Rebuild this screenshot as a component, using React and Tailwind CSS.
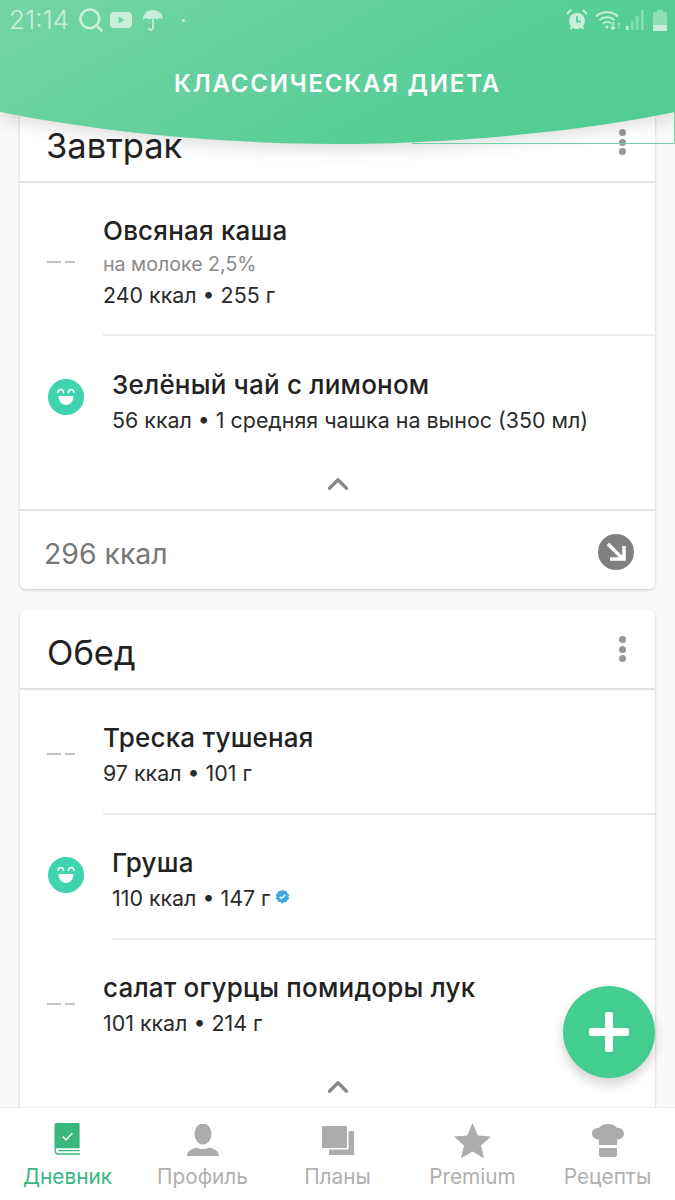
import { ChevronUp, Search } from "lucide-react";

const font = "font-[Inter,'Noto_Sans',sans-serif]";

function Dash({ offset }) {
  return (
    <div className={`flex w-[28px] gap-[4px] ${offset}`}>
      <span className="h-[2px] w-[14px] bg-[#c4c4c4]" />
      <span className="h-[2px] w-[10px] bg-[#c4c4c4]" />
    </div>
  );
}

function Smile() {
  return (
    <svg width="36" height="36" viewBox="0 0 36 36" className="mt-[10px] shrink-0">
      <circle cx="18" cy="18" r="18" fill="#3fd3ae" />
      <path d="M10 13.5c.6-4 5-4 5.6 0M20.4 13.5c.6-4 5-4 5.6 0" fill="none" stroke="#fff" strokeWidth="1.6" strokeLinecap="round" />
      <path d="M10.5 17h15c0 5.5-3.2 9-7.5 9s-7.5-3.500-7.500-9z" fill="#fff" />
    </svg>
  );
}

function Verified() {
  return (
    <svg width="15" height="15" viewBox="0 0 24 24" className="ml-[5px] mb-[3px]">
      <path d="M12 1l3 2.200 3.700-.1 1.100 3.500 3 2.200-1.200 3.200 1.200 3.200-3 2.200-1.100 3.500-3.700-.1L12 23l-3-2.200-3.700.1-1.100-3.500-3-2.200L2.400 12 1.200 8.800l3-2.200 1.100-3.500 3.700.1z" fill="#3fa6e6" />
      <path d="M7.500 12.300l3 3 6-6" fill="none" stroke="#fff" strokeWidth="2.200" />
    </svg>
  );
}

function Food({ icon, name, note, kcal, badge, top = "pt-[32px]", bottom = "pb-[22px]" }) {
  return (
    <div className={`flex items-start pl-[27px] ${top} ${bottom}`}>
      <div className={icon === "smile" ? "ml-px mr-[28px]" : "mr-[28px]"}>
        {icon === "smile" ? <Smile /> : <Dash offset={icon} />}
      </div>
      <div>
        <div className="text-[26px] leading-[32px] font-medium tracking-[0.2px] text-[#222] whitespace-nowrap">{name}</div>
        {note && <div className="text-[19.600px] leading-[34px] text-[#8a8a8a]">{note}</div>}
        <div className={`flex items-center text-[21.400px] leading-[36px] text-[#2a2a2a] whitespace-nowrap ${note ? "-mt-[4px]" : "mt-px"}`}>
          {kcal}
          {badge && <Verified />}
        </div>
      </div>
    </div>
  );
}

function CardHead({ title, left = "pl-[26px]" }) {
  return (
    <div className={`flex h-[80px] items-start justify-between border-b-2 border-[#e2e2e2] pr-[29px] ${left}`}>
      <div className="mt-[22px] text-[34.500px] leading-[42px] text-[#222]">{title}</div>
      <div className="mt-[26px] flex flex-col gap-[2.500px]">
        <span className="size-[7px] rounded-full bg-[#969696]" />
        <span className="size-[7px] rounded-full bg-[#969696]" />
        <span className="size-[7px] rounded-full bg-[#969696]" />
      </div>
    </div>
  );
}

function Collapse() {
  return (
    <div className="flex h-[71px] justify-center pt-[29px]">
      <ChevronUp size={34} strokeWidth={2.3} className="text-[#888]" />
    </div>
  );
}

function StatusBar() {
  return (
    <div className="flex h-[40px] items-center justify-between pl-[9px] pr-[8px] text-[#c9efdc]">
      <div className="flex items-center">
        <span className="text-[26px] leading-none font-light">21:14</span>
        <Search size={28} strokeWidth={2.2} className="ml-[8px]" />
        <svg width="22" height="16" viewBox="0 0 22 16" className="ml-[5px]">
          <rect width="22" height="16" rx="4" fill="currentColor" />
          <path d="M8.500 4.500l6 3.500-6 3.500z" fill="#6fd2a3" />
        </svg>
        <svg width="22" height="22" viewBox="0 0 22 22" className="ml-[10px]">
          <path d="M1 10.500C1 5 5.500 1 11 1s10 4 10 9.500c-2-1.600-4-1.600-6 0-2.500-1.600-5.500-1.600-8 0-2-1.600-4-1.600-6 0z" fill="currentColor" />
          <path d="M11 9v9.500c0 3-4 3-4 .5" fill="none" stroke="currentColor" strokeWidth="1.800" />
        </svg>
        <span className="ml-[18px] size-[3px] rounded-full bg-current" />
      </div>
      <div className="flex items-center">
        <svg width="22" height="22" viewBox="0 0 22 22">
          <circle cx="11" cy="12" r="8" fill="currentColor" />
          <path d="M11 7v5.500h4" fill="none" stroke="#60cf9c" strokeWidth="1.800" />
          <path d="M1 5l4-4M21 5l-4-4M4.500 20l2-2.500M17.500 20l-2-2.500" stroke="currentColor" strokeWidth="2" />
        </svg>
        <svg width="27" height="22" viewBox="0 0 27 22" className="ml-[7px]">
          <path d="M1 7.500C7 1.800 17 1.800 23 7.500M4.500 11c4.500-3.800 10.500-3.800 15 0M8 14.500c2.500-2 5.500-2 8 0" fill="none" stroke="currentColor" strokeWidth="1.800" />
          <circle cx="12" cy="18" r="1.600" fill="currentColor" />
          <path d="M18 13v7M16 18l2 2.500 2-2.500" fill="none" stroke="currentColor" strokeWidth="1.400" />
          <path d="M24 20v-6M22.500 16l1.500-2 1.500 2" fill="none" stroke="currentColor" strokeWidth="1" opacity=".6" />
        </svg>
        <svg width="18" height="20" viewBox="0 0 18 20" className="ml-[4px]">
          <rect x="0" y="16" width="2.500" height="4" fill="currentColor" />
          <rect x="5" y="11" width="2.500" height="9" fill="currentColor" opacity=".45" />
          <rect x="10" y="6" width="2.500" height="14" fill="currentColor" opacity=".45" />
          <rect x="15" y="0" width="2.500" height="20" fill="currentColor" opacity=".45" />
        </svg>
        <svg width="14" height="21" viewBox="0 0 14 21" className="ml-[9px]">
          <path d="M4 0h6v2h3a1 1 0 0 1 1 1v17a1 1 0 0 1-1 1H1a1 1 0 0 1-1-1V3a1 1 0 0 1 1-1h3z" fill="currentColor" opacity=".5" />
          <path d="M0 15h14v5a1 1 0 0 1-1 1H1a1 1 0 0 1-1-1z" fill="currentColor" />
        </svg>
      </div>
    </div>
  );
}

function Header() {
  return (
    <div className="absolute inset-x-0 top-0 h-[146px]">
      <svg width="675" height="146" viewBox="0 0 675 146" className="absolute inset-0 drop-shadow-[0_6px_8px_rgba(0,0,0,0.12)]">
        <defs>
          <linearGradient id="headerFill" x1="0" y1="0" x2="1" y2="0.4">
            <stop offset="0" stopColor="#74d4a6" />
            <stop offset="1" stopColor="#51cc95" />
          </linearGradient>
        </defs>
        <path d="M0 112C110 134 230 144 340 144C420 144 560 136 675 112V0H0z" fill="url(#headerFill)" />
      </svg>
      <svg width="675" height="146" viewBox="0 0 675 146" className="absolute inset-0">
        <path d="M412 143.500H674.500V112" fill="none" stroke="#6ed3a5" strokeWidth="1" />
      </svg>
      <div className="relative">
        <StatusBar />
        <div className="mt-[28px] text-center text-[24px] leading-[32px] font-semibold tracking-[1.8px] text-white">
          КЛАССИЧЕСКАЯ ДИЕТА
        </div>
      </div>
    </div>
  );
}

function Tab({ label, active, children }) {
  return (
    <div className="flex flex-col items-center">
      <div className="flex h-[50px] items-center justify-center pt-[10px]">{children}</div>
      <div className={`mt-[4px] text-[20.800px] leading-[26px] ${active ? "text-[#39b77f]" : "text-[#b0b0b0]"}`}>{label}</div>
    </div>
  );
}

function TabBar() {
  return (
    <div className="absolute inset-x-0 bottom-0 grid h-[93px] grid-cols-5 border-t border-[#efefef] bg-white pt-[2px]">
      <Tab label="Дневник" active>
        <svg width="27" height="32" viewBox="0 0 27 33" className="-mt-[3px]">
          <path d="M2 0h23a1 1 0 0 1 1 1v25H0V2a2 2 0 0 1 2-2z" fill="#39b77f" />
          <path d="M1 26v3c0 2 1 3 3 3h22.500M4 28.500h22" fill="none" stroke="#39b77f" strokeWidth="1.500" />
          <path d="M8.500 14l3.500 3.500 6.500-7" fill="none" stroke="#fff" strokeWidth="1.500" />
        </svg>
      </Tab>
      <Tab label="Профиль">
        <svg width="32" height="32" viewBox="0 0 32 32">
          <ellipse cx="16" cy="10" rx="8.500" ry="10.500" fill="#acacac" />
          <path d="M0 32c0-5 4-7 10-8.500 3.500 2 8.500 2 12 0C28 25 32 27 32 32z" fill="#acacac" />
        </svg>
      </Tab>
      <Tab label="Планы">
        <svg width="32" height="29" viewBox="0 0 32 29" className="mt-px">
          <rect x="0" y="0" width="25" height="22" rx="1" fill="#acacac" />
          <path d="M26.500 5H32v24H7v-5.500h19.500z" fill="#acacac" />
        </svg>
      </Tab>
      <Tab label="Premium">
        <svg width="37" height="35" viewBox="0 0 37 35">
          <path d="M18.500 0l5.300 12.400 13.200 1.200-10 8.800 3 13-11.500-6.900-11.500 6.900 3-13L0 13.600l13.200-1.200z" fill="#acacac" />
        </svg>
      </Tab>
      <Tab label="Рецепты">
        <svg width="32" height="33" viewBox="0 0 32 33">
          <path d="M7 21v-5.500C3 15.500 0 13 0 9.500S3 3.500 7 4c1.500-2.500 5-4 9-4s7.500 1.500 9 4c4-.5 7 2 7 5.500s-3 6-7 6V21z" fill="#acacac" />
          <path d="M7 24h18v7a2 2 0 0 1-2 2H9a2 2 0 0 1-2-2z" fill="#acacac" />
        </svg>
      </Tab>
    </div>
  );
}

export default function App() {
  return (
    <div className={`relative h-[1200px] w-[675px] overflow-hidden bg-[#f9f9f9] ${font}`}>
      <div className="flex flex-col gap-[21px] pt-[103px]">
        <div className="ml-[20px] w-[635px] rounded-[6px] bg-white shadow-[0_1px_3px_rgba(0,0,0,0.2)]">
          <CardHead title="Завтрак" />
          <Food icon="mt-[46px]" name="Овсяная каша" note="на молоке 2,5%" kcal="240 ккал • 255 г" bottom="pb-[21px]" />
          <div className="ml-[83px] h-[2px] bg-[#ececec]" />
          <Food icon="smile" name="Зелёный чай с лимоном" kcal="56 ккал • 1 средняя чашка на вынос (350 мл)" top="pt-[33px]" bottom="pb-0" />
          <Collapse />
          <div className="flex h-[80px] items-start justify-between border-t-2 border-[#e2e2e2] pl-[24px] pr-[21px]">
            <div className="mt-[25px] text-[28.400px] leading-[36px] text-[#777]">296 ккал</div>
            <svg width="36" height="36" viewBox="0 0 36 36" className="mt-[23px]">
              <circle cx="18" cy="18" r="18" fill="#808080" />
              <path d="M10 10l15 15M12 25h14V12" fill="none" stroke="#fff" strokeWidth="3.500" />
            </svg>
          </div>
        </div>

        <div className="ml-[20px] w-[635px] rounded-[6px] bg-white pb-[40px] shadow-[0_1px_3px_rgba(0,0,0,0.2)]">
          <CardHead title="Обед" left="pl-[27px]" />
          <Food icon="mt-[31px]" name="Треска тушеная" kcal="97 ккал • 101 г" />
          <div className="ml-[83px] h-[2px] bg-[#ececec]" />
          <Food icon="smile" name="Груша" kcal="110 ккал • 147 г" badge />
          <div className="ml-[92px] h-[2px] bg-[#ececec]" />
          <Food icon="mt-[31px]" name="салат огурцы помидоры лук" kcal="101 ккал • 214 г" bottom="pb-0" />
          <Collapse />
        </div>
      </div>

      <Header />

      <div className="absolute left-[563px] top-[986px] flex size-[92px] items-center justify-center rounded-full bg-[#43cd90] shadow-[0_6px_12px_rgba(0,0,0,0.18)]">
        <div className="relative size-[40px]">
          <span className="absolute left-[16px] top-0 h-[40px] w-[8px] rounded-[2px] bg-white" />
          <span className="absolute left-0 top-[16px] h-[8px] w-[40px] rounded-[2px] bg-white" />
        </div>
      </div>

      <TabBar />
    </div>
  );
}
